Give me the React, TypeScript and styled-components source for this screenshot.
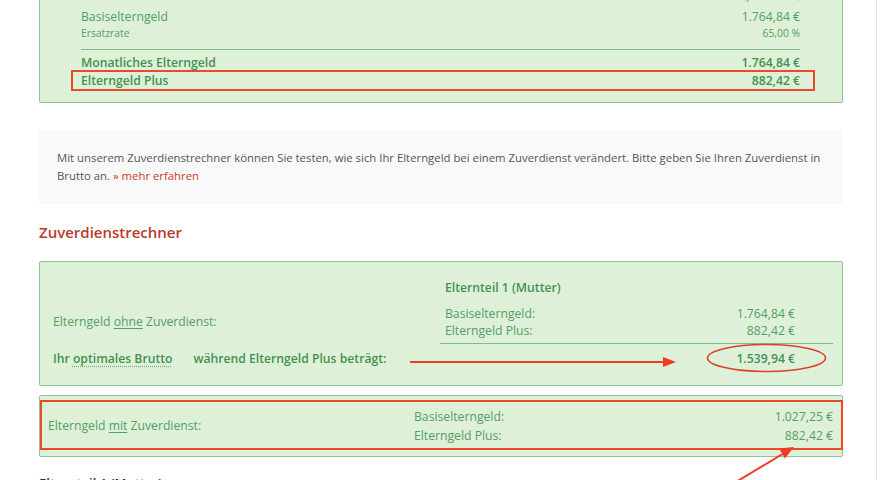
import React from "react";
import styled, { createGlobalStyle } from "styled-components";

const Global = createGlobalStyle`
  html, body { margin: 0; padding: 0; background: #fff; }
  body { font-family: "Open Sans", "Noto Sans", sans-serif; overflow: hidden; }
  * { box-sizing: border-box; }
`;

const Page = styled.div`
  width: 877px;
  height: 480px;
  border-right: 1px solid #e8e8e8;
  overflow: hidden;
`;

const Main = styled.div`
  width: 843px;
  padding-left: 39px;
  margin-top: -27px;
`;

const GreenBox = styled.div<{ $pl: number; $pr: number; $pt: number; $pb: number }>`
  position: relative;
  background: #dff0d8;
  border: 1px solid #8cc698;
  border-radius: 2px;
  padding: ${(p) => `${p.$pt}px ${p.$pr}px ${p.$pb}px ${p.$pl}px`};
  color: #52a062;
  font-size: 12.2px;
`;

const Row = styled.div<{ $bold?: boolean; $small?: boolean; $lh?: number }>`
  position: relative;
  display: flex;
  justify-content: space-between;
  align-items: center;
  line-height: ${(p) => p.$lh ?? 18}px;
  font-size: ${(p) => (p.$small ? "10.3px" : "12.2px")};
  font-weight: ${(p) => (p.$bold ? 600 : 400)};
  color: ${(p) => (p.$bold ? "#3f9350" : "#52a062")};
`;

const Divider = styled.div<{ $mt: number; $mb: number }>`
  height: 1px;
  background: #7fbd8b;
  margin: ${(p) => `${p.$mt}px 0 ${p.$mb}px`};
`;

const RedRect = styled.div<{ $t: number; $r: number; $b: number; $l: number }>`
  position: absolute;
  top: ${(p) => p.$t}px;
  right: ${(p) => p.$r}px;
  bottom: ${(p) => p.$b}px;
  left: ${(p) => p.$l}px;
  border: 2px solid #ea4a2a;
  pointer-events: none;
`;

const InfoBox = styled.div`
  margin-top: 27px;
  background: #f9f9f9;
  padding: 19px 10px 19px 18px;
  font-size: 11.35px;
  line-height: 18px;
  color: #555;
`;

const MoreLink = styled.a`
  color: #c9392b;
  text-decoration: none;
`;

const Heading = styled.h2`
  margin: 17px 0 18px;
  font-size: 15px;
  line-height: 22px;
  font-weight: 600;
  color: #b93a2b;
`;

const CalcGrid = styled.div`
  display: grid;
  grid-template-columns: 1fr 393px;
  grid-template-rows: auto auto auto auto;
  align-items: center;
`;

const LeftLabel = styled.div<{ $row: string }>`
  grid-column: 1;
  grid-row: ${(p) => p.$row};
  line-height: 18px;
`;

const BoldLabel = styled.div`
  grid-column: 1;
  grid-row: 4;
  font-weight: 600;
  color: #3f9350;
  line-height: 18px;
  display: flex;
  gap: 21px;
`;

const Dotted = styled.span`
  text-decoration: underline dotted #7aa883;
  text-underline-offset: 3px;
`;

const Under = styled.span`
  text-decoration: underline;
  text-underline-offset: 2px;
`;

const RightCell = styled.div<{ $row: number; $pl: number; $pr: number }>`
  grid-column: 2;
  grid-row: ${(p) => p.$row};
  padding: 0 ${(p) => p.$pr}px 0 ${(p) => p.$pl}px;
`;

const ColHead = styled.div`
  font-weight: 600;
  color: #3f9350;
  line-height: 18px;
  margin-bottom: 8px;
`;

const RightDivider = styled.div`
  grid-column: 2;
  grid-row: 3;
  height: 1px;
  background: #7fbd8b;
  margin: 4px 0 6px;
`;

const Overlay = styled.svg`
  position: absolute;
  overflow: visible;
  pointer-events: none;
`;

const ResultGrid = styled.div`
  display: grid;
  grid-template-columns: 366px 1fr;
  align-items: center;
`;

const Footer = styled.div`
  margin-top: 17px;
  font-size: 13px;
  line-height: 18px;
  font-weight: 600;
  color: #333;
`;

export default function App() {
  return (
    <>
      <Global />
      <Page>
        <Main>
          <GreenBox $pl={41} $pr={42} $pt={16} $pb={12}>
            <Row $small $lh={11}>
              <span></span>
              <span>(pro Monat)</span>
            </Row>
            <Row $lh={18} style={{ marginTop: 7 }}>
              <span>Basiselterngeld</span>
              <span>1.764,84 €</span>
            </Row>
            <Row $small $lh={14}>
              <span>Ersatzrate</span>
              <span>65,00 %</span>
            </Row>
            <Divider $mt={9} $mb={4} />
            <Row $bold>
              <span>Monatliches Elterngeld</span>
              <span>1.764,84 €</span>
            </Row>
            <Row $bold>
              <span>Elterngeld Plus</span>
              <span>882,42 €</span>
              <RedRect $t={-2} $r={-15} $b={-1} $l={-10} />
            </Row>
          </GreenBox>

          <InfoBox>
            Mit unserem Zuverdienstrechner können Sie testen, wie sich Ihr Elterngeld bei einem Zuverdienst verändert. Bitte geben Sie Ihren Zuverdienst in Brutto an.{" "}
            <MoreLink href="#">» mehr erfahren</MoreLink>
          </InfoBox>

          <Heading>Zuverdienstrechner</Heading>

          <GreenBox $pl={13} $pr={9} $pt={17} $pb={17}>
            <CalcGrid>
              <RightCell $row={1} $pl={5} $pr={38}>
                <ColHead>Elternteil 1 (Mutter)</ColHead>
              </RightCell>
              <LeftLabel $row="2">
                Elterngeld <Under>ohne</Under> Zuverdienst:
              </LeftLabel>
              <RightCell $row={2} $pl={5} $pr={38}>
                <Row $lh={17}>
                  <span>Basiselterngeld:</span>
                  <span>1.764,84 €</span>
                </Row>
                <Row $lh={17}>
                  <span>Elterngeld Plus:</span>
                  <span>882,42 €</span>
                </Row>
              </RightCell>
              <RightDivider />
              <BoldLabel>
                <span>
                  Ihr <Dotted>optimales Brutto</Dotted>
                </span>
                <span>während Elterngeld Plus beträgt:</span>
              </BoldLabel>
              <RightCell $row={4} $pl={5} $pr={38}>
                <Row $bold>
                  <span></span>
                  <span>1.539,94 €</span>
                </Row>
              </RightCell>
            </CalcGrid>
            <Overlay width="1" height="1" style={{ left: 370, top: 100 }}>
              <line x1="0" y1="0" x2="256" y2="0" stroke="#ee3b22" strokeWidth="2" />
              <polygon points="253,-5 266,0 253,5" fill="#ee3b22" />
            </Overlay>
            <Overlay width="1" height="1" style={{ left: 667, top: 82 }}>
              <ellipse cx="59.5" cy="14" rx="59" ry="13.5" fill="none" stroke="#d9432a" strokeWidth="1.6" />
            </Overlay>
          </GreenBox>

          <GreenBox $pl={8} $pr={9} $pt={11} $pb={11} style={{ marginTop: 9 }}>
            <ResultGrid>
              <div style={{ lineHeight: "18px" }}>
                Elterngeld <Under>mit</Under> Zuverdienst:
              </div>
              <div>
                <Row $lh={19}>
                  <span>Basiselterngeld:</span>
                  <span>1.027,25 €</span>
                </Row>
                <Row $lh={19}>
                  <span>Elterngeld Plus:</span>
                  <span>882,42 €</span>
                </Row>
              </div>
            </ResultGrid>
            <RedRect $t={4} $r={-1} $b={6} $l={0} />
            <Overlay width="1" height="1" style={{ left: 696, top: 86 }}>
              <line x1="0" y1="0" x2="50" y2="-30" stroke="#ee3b22" strokeWidth="2" />
              <polygon points="58,-35 43,-33.5 49,-23.5" fill="#ee3b22" />
            </Overlay>
          </GreenBox>

          <Footer>Elternteil 1 (Mutter)</Footer>
        </Main>
      </Page>
    </>
  );
}
